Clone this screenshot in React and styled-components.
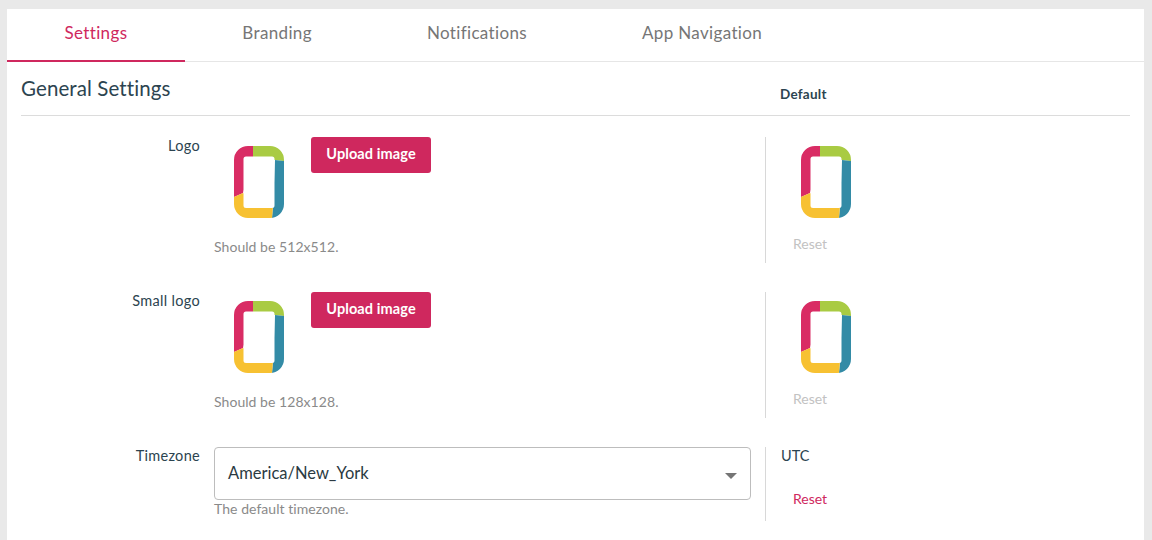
import { useId } from "react";
import styled, { createGlobalStyle } from "styled-components";

const pink = "#cf285e";

const GlobalStyle = createGlobalStyle`
  html, body {
    margin: 0;
    height: 540px;
    overflow: hidden;
    background: #e9e9e9;
    font-family: Lato, "Open Sans", sans-serif;
    color: #2c4450;
  }
`;

const Page = styled.div`
  padding: 9px 8px 0 7px;
`;

const Card = styled.div`
  background: #fff;
  height: 531px;
`;

const Tabs = styled.nav`
  display: flex;
  height: 52px;
  border-bottom: 1px solid #e6e6e6;
`;

const Tab = styled.div`
  padding: 14px 57.5px 0;
  font-size: 17px;
  letter-spacing: 0.35px;
  line-height: 20px;
  color: ${(p) => (p.$active ? pink : "#767676")};
  border-bottom: 2px solid ${(p) => (p.$active ? pink : "transparent")};
  margin-bottom: -1px;
`;

const Body = styled.div`
  padding: 0 14px;
`;

const SectionHead = styled.header`
  display: grid;
  grid-template-columns: 759px 1fr;
  height: 53px;
  border-bottom: 1px solid #dcdcdc;
  margin-bottom: 21px;
`;

const SectionTitle = styled.h2`
  margin: 14px 0 0;
  font-size: 20.5px;
  letter-spacing: 0.1px;
  line-height: 24px;
  font-weight: 400;
  color: #2c4450;
`;

const DefaultTitle = styled.div`
  margin-top: 24px;
  font-size: 13.5px;
  letter-spacing: 0.25px;
  line-height: 16px;
  font-weight: 700;
`;

const Row = styled.section`
  display: grid;
  grid-template-columns: 179px 537px 1fr;
  column-gap: 14px;
  margin-bottom: 29px;
`;

const Label = styled.label`
  text-align: right;
  font-size: 14.5px;
  letter-spacing: 0.3px;
  line-height: 18px;
`;

const ImageLine = styled.div`
  display: flex;
  align-items: flex-start;
  gap: 7px;
`;

const LogoBox = styled.div`
  width: 90px;
  height: 90px;
  display: flex;
  justify-content: center;
  padding-top: 9px;
  box-sizing: border-box;
`;

const UploadButton = styled.button`
  width: 120px;
  height: 36px;
  padding: 0 0 4px;
  border: 0;
  border-radius: 3px;
  background: ${pink};
  color: #fff;
  font: 700 14.5px Lato, sans-serif;
  letter-spacing: 0.1px;
`;

const Hint = styled.p`
  margin: ${(p) => (p.$tight ? "1px" : "12px")} 0 0;
  font-size: 14px;
  letter-spacing: 0.05px;
  line-height: 16px;
  color: #8a8a8a;
`;

const DefaultCell = styled.div`
  border-left: 1px solid #d8d8d8;
  padding-left: 15px;
  min-height: ${(p) => p.$height}px;
  box-sizing: border-box;
`;

const DefaultValue = styled.div`
  font-size: 14.5px;
  line-height: 18px;
`;

const ResetLink = styled.div`
  margin: ${(p) => p.$top}px 0 0 12px;
  font-size: 14px;
  line-height: 16px;
  color: ${(p) => (p.$enabled ? pink : "#c2c2c2")};
`;

const Select = styled.div`
  height: 49px;
  border: 1px solid #bdbdbd;
  border-radius: 4px;
  display: flex;
  align-items: center;
  justify-content: space-between;
  padding: 0 13px 2px;
  font-size: 16.5px;
  color: #2b3a42;
`;

const Caret = styled.span`
  width: 0;
  height: 0;
  margin-top: 6px;
  border-left: 6px solid transparent;
  border-right: 6px solid transparent;
  border-top: 6px solid #757575;
`;

const Logo = () => {
  const id = useId();
  return (
    <svg width="51" height="72" viewBox="0 0 51 72">
      <defs>
        <clipPath id={id}>
          <path
            clipRule="evenodd"
            d="M14 0H36A14 14 0 0 1 50 14V58A14 14 0 0 1 36 72H14A14 14 0 0 1 0 58V14A14 14 0 0 1 14 0Z M12 10.500A2.500 2.500 0 0 0 9.500 13V59.500A2.500 2.500 0 0 0 12 62H38A2.500 2.500 0 0 0 40.500 59.500V13A2.500 2.500 0 0 0 38 10.500Z"
          />
        </clipPath>
      </defs>
      <g clipPath={`url(#${id})`}>
        <polygon points="0,0 19,0 19,12 9,47 0,51" fill="#d92c64" />
        <polygon points="19,0 51,0 51,15 41,14 19,12" fill="#a9cb43" />
        <polygon points="41,14 51,15 51,72 38,72 39,60" fill="#338ba6" />
        <polygon points="0,51 9,47 39,60 38,72 0,72" fill="#f7c132" />
      </g>
    </svg>
  );
};

const ImageRow = ({ label, size }) => (
  <Row>
    <Label>{label}</Label>
    <div>
      <ImageLine>
        <LogoBox>
          <Logo />
        </LogoBox>
        <UploadButton>Upload image</UploadButton>
      </ImageLine>
      <Hint>Should be {size}.</Hint>
    </div>
    <DefaultCell $height={126}>
      <LogoBox>
        <Logo />
      </LogoBox>
      <ResetLink $top={9}>Reset</ResetLink>
    </DefaultCell>
  </Row>
);

export default function App() {
  return (
    <>
      <GlobalStyle />
      <Page>
        <Card>
          <Tabs>
            <Tab $active>Settings</Tab>
            <Tab>Branding</Tab>
            <Tab>Notifications</Tab>
            <Tab>App Navigation</Tab>
          </Tabs>
          <Body>
            <SectionHead>
              <SectionTitle>General Settings</SectionTitle>
              <DefaultTitle>Default</DefaultTitle>
            </SectionHead>
            <ImageRow label="Logo" size="512x512" />
            <ImageRow label="Small logo" size="128x128" />
            <Row>
              <Label>Timezone</Label>
              <div>
                <Select>
                  America/New_York
                  <Caret />
                </Select>
                <Hint $tight>The default timezone.</Hint>
              </div>
              <DefaultCell $height={74}>
                <DefaultValue>UTC</DefaultValue>
                <ResetLink $top={26} $enabled>
                  Reset
                </ResetLink>
              </DefaultCell>
            </Row>
          </Body>
        </Card>
      </Page>
    </>
  );
}
